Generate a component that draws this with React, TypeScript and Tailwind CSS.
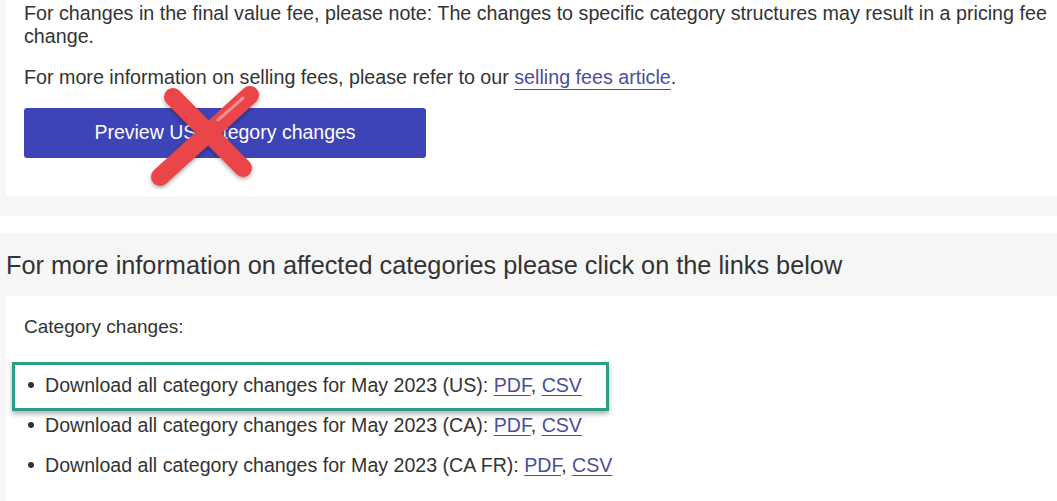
import React from "react";

function RedX() {
  return (
    <svg
      className="absolute left-[140px] top-[84px]"
      width="125"
      height="105"
      viewBox="0 0 125 105"
    >
      <defs>
        <filter id="sh" x="-20%" y="-20%" width="140%" height="140%">
          <feDropShadow dx="0" dy="2" stdDeviation="2" floodColor="#000" floodOpacity="0.35" />
        </filter>
      </defs>
      <g filter="url(#sh)" strokeLinecap="round" stroke="#ea4448" strokeWidth="18">
        <line x1="33" y1="13" x2="103" y2="84" />
        <line x1="110" y1="11" x2="20" y2="93" />
      </g>
      <line x1="103" y1="14" x2="78" y2="36" stroke="#f6a0a2" strokeWidth="3" strokeLinecap="round" opacity="0.8" />
    </svg>
  );
}

function Link({ children, offset = "underline-offset-[3px]" }: { children: React.ReactNode; offset?: string }) {
  return <a className={`text-[#4b4e9c] underline decoration-1 ${offset}`}>{children}</a>;
}

export default function App() {
  const items = ["US", "CA", "CA FR"];
  return (
    <div
      className="relative w-[1057px] h-[501px] overflow-hidden bg-white text-[#333]"
      style={{ fontFamily: '"Liberation Sans", Arial, sans-serif' }}
    >
      <div className="bg-[#f7f6f6] pl-[6px]">
        <div className="bg-white h-[196px] pl-[18px] pt-[2px] pr-[10px]">
          <p className="text-[19.7px] leading-[23px]">
            For changes in the final value fee, please note: The changes to specific category structures may result in a pricing fee change.
          </p>
          <p className="text-[19.7px] leading-[23px] mt-[18px]">
            For more information on selling fees, please refer to our{" "}
            <Link offset="underline-offset-[5px]">selling fees article</Link>.
          </p>
          <div className="mt-[19px] w-[402px] h-[50px] rounded-[3px] bg-[#3d44b7] flex items-center justify-center text-white text-[19.5px]">
            Preview US category changes
          </div>
        </div>
      </div>
      <div className="h-[20px] bg-[#f7f6f6]" />
      <div className="h-[17px] bg-white" />
      <div className="h-[63px] bg-[#f7f6f6] flex items-center pl-[6px]">
        <h2 className="text-[25.3px] leading-[30px] text-[#333]">
          For more information on affected categories please click on the links below
        </h2>
      </div>
      <div className="bg-[#f7f6f6] pl-[6px]">
        <div className="bg-white pl-[18px] pt-[20px] h-[210px]">
          <p className="text-[19px] leading-[22px]">Category changes:</p>
          <ul className="mt-[35px] flex flex-col gap-[16px]">
            {items.map((c) => (
              <li key={c} className="flex items-center text-[19.6px] leading-[24px]">
                <span className="w-[6px] h-[6px] rounded-full bg-[#333] ml-[4px] mr-[11px]" />
                <span>
                  Download all category changes for May 2023 ({c}): <Link>PDF</Link>, <Link>CSV</Link>
                </span>
              </li>
            ))}
          </ul>
        </div>
      </div>
      <RedX />
      <div className="absolute left-[12px] top-[362px] w-[597px] h-[49px] border-[3px] border-[#2b9e89] shadow-[0_3px_5px_rgba(0,0,0,0.3)]" />
    </div>
  );
}
